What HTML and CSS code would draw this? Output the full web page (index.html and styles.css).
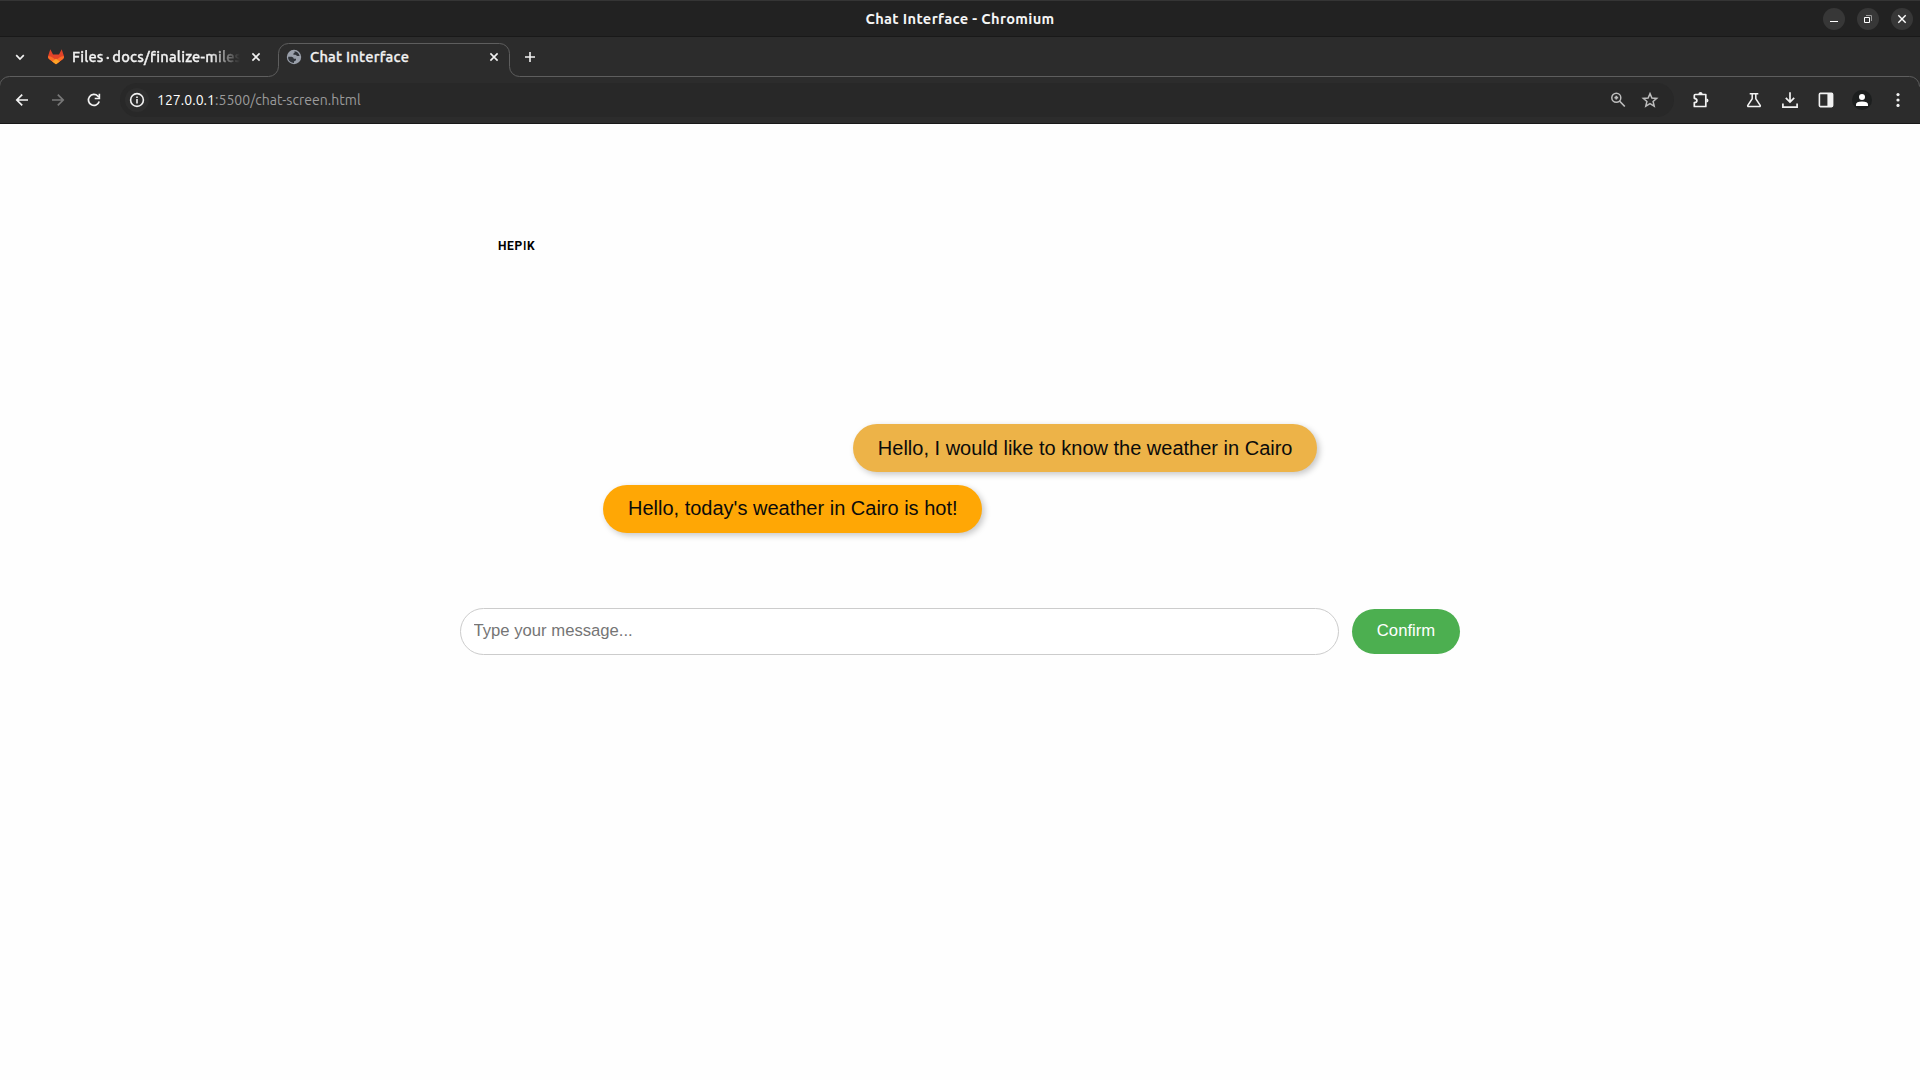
FILE: index.html
```html
<!DOCTYPE html>
<html lang="en">
<head>
<meta charset="utf-8">
<title>Chat Interface</title>
<link rel="stylesheet" href="styles.css">
</head>
<body>
<header class="titlebar">
  <span class="window-title">Chat Interface - Chromium</span>
  <div class="window-controls">
    <span class="window-btn"><svg viewBox="0 0 22 22"><path d="M7 13.500h8" stroke="#fff"/></svg></span>
    <span class="window-btn"><svg viewBox="0 0 22 22"><path d="M9 7.500h5.500V13" stroke="#999" fill="none"/><path d="M7.500 9.500h5v5h-5z" stroke="#fff" fill="none"/></svg></span>
    <span class="window-btn"><svg viewBox="0 0 22 22"><path d="M7.300 7.300l7.400 7.400M14.700 7.300l-7.400 7.400" stroke="#fff" stroke-width="1.400"/></svg></span>
  </div>
</header>
<nav class="tabstrip">
  <svg class="tab-outline" viewBox="0 0 1920 50"><path d="M-.5 49.500a10 10 0 0 1 10-10H268.500a10 10 0 0 0 10-10V16.500a10 10 0 0 1 10-10H499.500a10 10 0 0 1 10 10V29.500a10 10 0 0 0 10 10H1909.500a10 10 0 0 1 10 10" fill="none" stroke="#5e5e5e"/></svg>
  <svg class="icon tab-search" viewBox="0 0 18 18"><path d="M5.200 7.200L9 11l3.800-3.800" fill="none" stroke="#f2f2f2" stroke-width="1.700"/></svg>
  <div class="tab tab-files">
    <svg class="icon" viewBox="0 0 18 18"><path d="M3.300 1.200L1 8.300Q.6 10 2 11L9 16.200 16 11q1.400-1 1-2.700L14.700 1.200 12 6.500H6z" fill="#e24329"/><path d="M1.100 8.200Q3.500 8 5.500 9.400L9 12l3.500-2.600Q14.500 8 16.900 8.200 17.300 10 16 11L9 16.200 2 11Q.7 10 1.100 8.200z" fill="#fc6d26"/><path d="M5.300 13.500L9 10.800l3.700 2.700L9 16.200z" fill="#fca326"/></svg>
    <span class="tab-label files-label">Files · docs/finalize-miles</span>
    <svg class="icon" viewBox="0 0 18 18"><path d="M5.400 5.400l7.200 7.200M12.600 5.400l-7.200 7.200" stroke="#f2f2f2" stroke-width="1.600"/></svg>
  </div>
  <div class="tab tab-chat">
    <svg class="icon" viewBox="0 0 18 18"><circle cx="9" cy="9" r="7.200" fill="#9aa0ab"/><path d="M9.500 3.300Q13.800 4 14.600 8H12.200L10.500 6.800H8.400V5.400L9.600 4.800z" fill="#30343a"/><path d="M3.200 8.700H6.600Q8.800 9 8.800 10.700H11V12.200L9 13.500V15Q4.600 14.600 3.200 10.800z" fill="#30343a"/></svg>
    <span class="tab-label chat-label">Chat Interface</span>
    <svg class="icon" viewBox="0 0 18 18"><path d="M5.400 5.400l7.200 7.200M12.600 5.400l-7.200 7.200" stroke="#f2f2f2" stroke-width="1.600"/></svg>
  </div>
  <svg class="icon new-tab" viewBox="0 0 18 18"><path d="M9 4v10M4 9h10" stroke="#f2f2f2" stroke-width="1.600"/></svg>
</nav>
<div class="toolbar">
  <div class="nav-buttons">
    <svg class="icon" viewBox="0 0 18 18"><path d="M15 9H4M9.200 3.600L3.800 9l5.400 5.400" fill="none" stroke="#f2f2f2" stroke-width="1.700"/></svg>
    <svg class="icon" viewBox="0 0 18 18"><path d="M3 9h11M8.800 3.600L14.200 9l-5.400 5.400" fill="none" stroke="#777" stroke-width="1.700"/></svg>
    <svg class="icon" viewBox="0 0 18 18"><path d="M14.200 10.500A5.500 5.500 0 1 1 12.900 5.100L14 6.200" fill="none" stroke="#f2f2f2" stroke-width="1.700"/><path d="M15.200 2.800v5.500H9.700V6.700h3.900V2.800z" fill="#f2f2f2"/></svg>
  </div>
  <div class="omnibox">
    <span class="site-info"><svg class="icon" viewBox="0 0 18 18"><circle cx="9" cy="9" r="6.400" fill="none" stroke="#f2f2f2" stroke-width="1.600"/><path d="M9 8.100v4.400M9 5.400v1.600" stroke="#f2f2f2" stroke-width="1.600"/></svg></span>
    <span class="url"><span class="url-host">127.0.0.1</span><span class="url-path">:5500/chat-screen.html</span></span>
    <div class="omnibox-actions">
      <svg class="icon" viewBox="0 0 18 18"><circle cx="7.300" cy="6.700" r="4.500" fill="none" stroke="#bdbdbd" stroke-width="1.500"/><path d="M10.500 10l5.300 5.500M7.300 4.800v3.800M5.400 6.700h3.800" stroke="#bdbdbd" stroke-width="1.700"/></svg>
      <svg class="icon" viewBox="0 0 18 18"><path d="M9 2.600l1.900 4.400 4.800.4-3.600 3.100 1.100 4.700L9 12.700l-4.200 2.500 1.100-4.700-3.600-3.100 4.800-.4z" fill="none" stroke="#bdbdbd" stroke-width="1.500"/></svg>
    </div>
  </div>
  <div class="toolbar-actions">
    <svg class="icon extensions" viewBox="0 0 18 18"><path d="M4.200 3.500h10.600v12h-11.500v-3.800q2.600-.2 2.600-2.200T3.300 7.300V4.500q0-1 .9-1z" fill="none" stroke="#f2f2f2" stroke-width="1.700" stroke-linejoin="round"/><path d="M7.400 3a2.100 2.100 0 0 1 4.200 0zM15.400 7.400a2.100 2.100 0 0 1 0 4.200z" fill="#f2f2f2"/></svg>
    <svg class="icon" viewBox="0 0 18 18"><path d="M4.700 2.800h8.600M7.200 3v4.700L2.700 14.500q-.2.900.7.900h11.200q.9 0 .7-.9L10.800 7.700V3" fill="none" stroke="#f2f2f2" stroke-width="1.500"/></svg>
    <svg class="icon" viewBox="0 0 18 18"><path d="M9 1.200v9.600M4.800 6.800L9 11l4.200-4.200M1.900 12.500v3.600h14.200v-3.600" fill="none" stroke="#f2f2f2" stroke-width="1.700"/></svg>
    <svg class="icon" viewBox="0 0 18 18"><rect x="2.400" y="2.400" width="13.200" height="13.200" rx="1" fill="none" stroke="#f2f2f2" stroke-width="1.600"/><path d="M10.400 2h5.200v14h-5.200z" fill="#f2f2f2"/></svg>
    <span class="avatar"><svg viewBox="0 0 20 20"><circle cx="10" cy="7" r="3" fill="#fff"/><path d="M4 16v-1.600q0-3 6-3t6 3V16z" fill="#fff"/></svg></span>
    <svg class="icon" viewBox="0 0 18 18" fill="#f2f2f2"><circle cx="9" cy="3.600" r="1.600"/><circle cx="9" cy="9" r="1.600"/><circle cx="9" cy="14.400" r="1.600"/></svg>
  </div>
</div>
<main class="page">
  <div class="logo">HEP<span class="logo-thin">I</span>K</div>
  <section class="messages">
    <p class="message message-user">Hello, I would like to know the weather in Cairo</p>
    <p class="message message-bot">Hello, today's weather in Cairo is hot!</p>
  </section>
  <form class="composer">
    <input class="composer-input" type="text" placeholder="Type your message...">
    <button class="composer-button" type="button">Confirm</button>
  </form>
</main>
</body>
</html>
```
FILE: styles.css
```css
* { box-sizing: border-box; }
body {
  margin: 0;
  height: 1080px;
  overflow: hidden;
  background: #fefefe;
  font-family: "Liberation Sans", Arial, sans-serif;
  color: #0b0b0b;
}
svg { display: block; }
.icon { width: 18px; height: 18px; flex: none; }

.titlebar {
  height: 37px;
  display: grid;
  grid-template-columns: 1fr auto 1fr;
  align-items: center;
  background: #222;
  border-top: 1px solid #353535;
  border-bottom: 1px solid #191919;
}
.window-title {
  grid-column: 2;
  font: 700 14.67px/20px Ubuntu, "Noto Sans", sans-serif;
  letter-spacing: .33px;
  color: #f5f5f5;
  white-space: nowrap;
}
.window-controls { display: flex; justify-content: flex-end; gap: 12px; padding-right: 7px; }
.window-btn { width: 22px; height: 22px; border-radius: 50%; background: #373737; }

.tabstrip {
  position: relative;
  height: 40px;
  display: flex;
  align-items: center;
  padding-left: 11px;
  background: #2c2c2c;
}
.tab-outline { position: absolute; left: 0; top: 0; width: 1920px; height: 50px; }
.tab-search { margin-right: 18px; }
.tab { display: flex; align-items: center; }
.tab-label {
  font: 500 14.67px/20px Ubuntu, "Noto Sans", sans-serif;
  letter-spacing: .25px;
  color: #f2f2f2;
  -webkit-text-stroke: .3px #f2f2f2;
  white-space: nowrap;
}
.tab-files { width: 218px; }
.files-label {
  width: 168px;
  margin: 0 7px;
  letter-spacing: .2px;
  word-spacing: -1.2px;
  -webkit-mask-image: linear-gradient(to right, #000 138px, transparent 168px);
  mask-image: linear-gradient(to right, #000 138px, transparent 168px);
}
.tab-chat { width: 218px; margin-left: 20px; }
.chat-label { flex: 1; margin-left: 7px; }
.new-tab { margin-left: 18px; }

.toolbar {
  height: 47px;
  display: flex;
  align-items: center;
  padding: 0 13px;
  background: #2c2c2c;
  border-bottom: 1px solid #181818;
}
.nav-buttons { display: flex; gap: 18px; }
.omnibox {
  width: 1554px;
  height: 34px;
  margin-left: 17px;
  padding: 0 15px 0 5px;
  display: flex;
  align-items: center;
  border-radius: 17px;
  background: #282828;
}
.site-info {
  width: 24px;
  height: 24px;
  padding: 3px;
  border-radius: 50%;
  background: #2e2e2e;
}
.url {
  margin-left: 8px;
  font: 400 14px/20px Ubuntu, "Noto Sans", sans-serif;
  letter-spacing: .03px;
  white-space: nowrap;
}
.url-host { color: #fff; }
.url-path { color: #9b9b9b; }
.omnibox-actions { display: flex; gap: 14px; margin-left: auto; }
.toolbar-actions { display: flex; align-items: center; gap: 18px; margin-left: 17px; }
.extensions { margin-right: 18px; }
.avatar { width: 20px; height: 20px; margin: 0 -1px; border-radius: 50%; background: #1c1e1e; }

.page { width: 1000px; margin: 0 auto; }
.logo {
  padding: 114px 0 0 38px;
  height: 300px;
  font: 700 12px/17px Roboto, sans-serif;
  letter-spacing: .65px;
  color: #000;
}
.logo-thin { font-weight: 500; }
.messages {
  width: 714px;
  margin: 0 auto;
  display: flex;
  flex-direction: column;
  gap: 13px;
}
.message {
  margin: 0;
  height: 48px;
  padding: 12px 24.5px 12px 25px;
  border-radius: 25px;
  font-size: 20px;
  line-height: 23px;
  white-space: nowrap;
  box-shadow: 2.5px 2.5px 6px rgba(0, 0, 0, .22);
}
.message-user { align-self: flex-end; padding-top: 13px; background: #edb348; }
.message-bot { align-self: flex-start; background: #ffa705; }
.composer { display: flex; align-items: center; gap: 13px; margin-top: 75px; }
.composer-input {
  flex: 1;
  height: 47px;
  padding: 0 12.5px 2px;
  border: 1px solid #ccc;
  border-radius: 25px;
  background: #fff;
  font: 16.67px/20px "Liberation Sans", Arial, sans-serif;
}
.composer-input::placeholder { color: #757575; }
.composer-button {
  width: 108px;
  height: 45px;
  padding: 0 0 2px;
  border: 0;
  border-radius: 25px;
  background: #4caf50;
  color: #fff;
  font: 16.67px/20px "Liberation Sans", Arial, sans-serif;
}
```
